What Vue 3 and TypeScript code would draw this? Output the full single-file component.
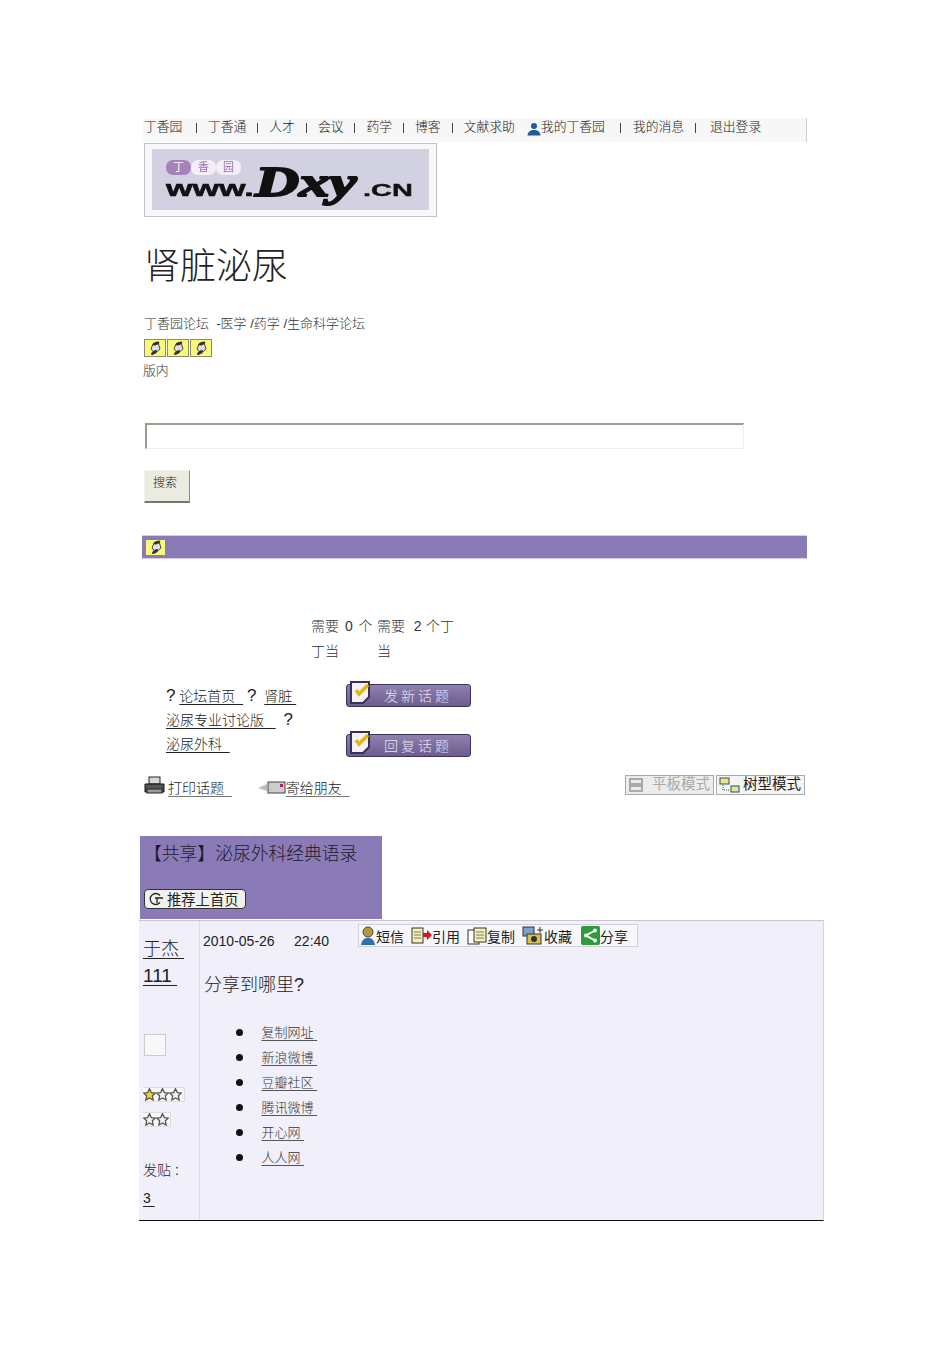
<script setup lang="ts">
const navA = ['丁香园', '丁香通', '人才', '会议', '药学', '博客']
const navB = ['我的消息', '退出登录']
const scrolls = [1, 2, 3]
const shares = ['复制网址', '新浪微博', '豆瓣社区', '腾讯微博', '开心网', '人人网']
const modeA = '平板模式'
const modeB = '树型模式'
const fullStars = [true, false, false]
</script>

<template>
  <div class="page">
    <nav class="topbar">
      <template v-for="(item, i) in navA" :key="item">
        <span>{{ item }}</span><i class="sep" :class="{ first: i === 0 }"></i>
      </template>
      <span>文献求助</span>
      <svg class="person" width="14" height="14" viewBox="0 0 14 14"><circle cx="7" cy="4" r="3" fill="#1f5a9c"/><path d="M0.5 13.5c.5-4 3-5.5 6.5-5.5s6 1.500 6.500 5.500z" fill="#1f5a9c"/></svg>
      <span>我的丁香园</span><i class="sep wide"></i>
      <span>{{ navB[0] }}</span><i class="sep last"></i>
      <span>{{ navB[1] }}</span>
    </nav>

    <div class="logo-frame">
      <div class="logo">
        <div class="logo-pill"><b>丁</b><b>香</b><b>园</b></div>
        <div class="logo-line">
          <span class="www">www.</span><span class="dxy">Dxy</span><span class="cn">.CN</span>
        </div>
      </div>
    </div>

    <h1 class="title">肾脏泌尿</h1>
    <p class="crumb">丁香园论坛&nbsp; -医学 /药学 /生命科学论坛</p>

    <div class="scroll-row">
      <span v-for="n in scrolls" :key="n" class="scroll">
        <svg width="14" height="14" viewBox="0 0 14 14"><path d="M5 3l5-1.500L12 8l-5 4.500L3 8z" fill="#e2e2dc" stroke="#444"/><ellipse cx="8" cy="2.500" rx="3.500" ry="1.500" transform="rotate(-20 8 2.500)" fill="#333"/><ellipse cx="6" cy="11.500" rx="3.500" ry="1.500" transform="rotate(-35 6 11.500)" fill="#333"/></svg>
      </span>
    </div>
    <p class="inside">版内</p>

    <input class="search" type="text" aria-label="搜索" />
    <button class="search-btn" type="button">搜索</button>

    <div class="band">
      <span class="scroll">
        <svg width="14" height="14" viewBox="0 0 14 14"><path d="M5 3l5-1.500L12 8l-5 4.500L3 8z" fill="#e2e2dc" stroke="#444"/><ellipse cx="8" cy="2.500" rx="3.500" ry="1.500" transform="rotate(-20 8 2.500)" fill="#333"/><ellipse cx="6" cy="11.500" rx="3.500" ry="1.500" transform="rotate(-35 6 11.500)" fill="#333"/></svg>
      </span>
    </div>

    <div class="need">
      <div><p class="wide-words">需要 0 个</p><p>丁当</p></div>
      <div><p class="tight-words">需要 &nbsp;2 个丁</p><p>当</p></div>
    </div>

    <div class="forum-row">
      <div class="trail">
        <span class="q">?</span> <a>论坛首页&nbsp;&nbsp;</a> <span class="q">?</span> &nbsp;<a>肾脏&nbsp;</a><br />
        <a>泌尿专业讨论版&nbsp;&nbsp;&nbsp;</a> &nbsp;<span class="q">?</span><br />
        <a>泌尿外科&nbsp;&nbsp;</a>
      </div>
      <div class="actions">
        <div class="post-btn">
          <svg class="doc" width="24" height="24" viewBox="0 0 24 24"><path d="M2 1h18v15l-6 6H2z" fill="#f4f2f8" stroke="#3a2f5c" stroke-width="2"/><path d="M7 9l3 4 9-9" fill="none" stroke="#e2b711" stroke-width="3.500"/></svg>
          <span>发新话题</span>
        </div>
        <div class="post-btn">
          <svg class="doc" width="24" height="24" viewBox="0 0 24 24"><path d="M2 1h18v15l-6 6H2z" fill="#f4f2f8" stroke="#3a2f5c" stroke-width="2"/><path d="M7 9l3 4 9-9" fill="none" stroke="#e2b711" stroke-width="3.500"/></svg>
          <span>回复话题</span>
        </div>
      </div>
    </div>

    <div class="tools">
      <svg class="printer" width="21" height="19" viewBox="0 0 21 19"><rect x="5" y="1" width="11" height="7" fill="#d8d8d8" stroke="#222"/><path d="M1 8h19v8H1z" fill="#555" stroke="#111"/><rect x="3" y="13" width="15" height="4" fill="#999" stroke="#222"/></svg>
      <a class="tool-link">打印话题&nbsp;&nbsp;</a>
      <svg class="mail" width="28" height="13" viewBox="0 0 28 13"><path d="M0 7l9-4v7z" fill="#bbb"/><rect x="10" y="1" width="17" height="11" fill="#ccc" stroke="#444"/><rect x="22" y="3" width="3" height="3" fill="#b0206a"/></svg>
      <a class="tool-link plain">寄给朋友&nbsp;&nbsp;</a>
      <div class="modes">
        <div class="mode off">
          <svg width="14" height="14" viewBox="0 0 14 14"><path d="M1 1h12v5H1zM1 8h12v5H1z" fill="none" stroke="#aaa" stroke-width="2"/></svg>
          <span>{{ modeA }}</span>
        </div>
        <div class="mode on">
          <svg width="21" height="16" viewBox="0 0 21 16"><path d="M4 6v7h7" fill="none" stroke="#555" stroke-dasharray="1 1"/><rect x="1" y="1" width="9" height="6" fill="#f0e28a" stroke="#355"/><rect x="12" y="9" width="8" height="6" fill="#f0e28a" stroke="#157"/></svg>
          <span>{{ modeB }}</span>
        </div>
      </div>
    </div>

    <section class="thread-head">
      <h2>【共享】泌尿外科经典语录</h2>
      <button class="recommend" type="button">
        <svg width="16" height="14" viewBox="0 0 16 14"><path d="M12 3.500A5.500 5.500 0 1 0 12 10.500" fill="none" stroke="#222" stroke-width="1.300"/><path d="M7 6h8M9 6v5" stroke="#222" stroke-width="1.300" fill="none"/></svg>
        推荐上首页
      </button>
    </section>

    <section class="post">
      <aside class="author">
        <a class="name">于杰&nbsp;</a>
        <a class="uid">111&nbsp;</a>
        <div class="avatar"></div>
        <div class="stars three">
          <svg v-for="(on, i) in fullStars" :key="i" width="13" height="13" viewBox="0 0 20 20"><path d="M10 1l2.800 6 6.200.8-4.600 4.200 1.200 6.400L10 15.200 4.400 18.400l1.200-6.400L1 7.800 7.200 7z" :fill="on ? '#f5d423' : '#f4f4f4'" stroke="#555" stroke-width="2"/></svg>
        </div>
        <div class="stars two">
          <svg v-for="i in 2" :key="i" width="13" height="13" viewBox="0 0 20 20"><path d="M10 1l2.800 6 6.200.8-4.600 4.200 1.200 6.400L10 15.200 4.400 18.400l1.200-6.400L1 7.800 7.200 7z" fill="#f4f4f4" stroke="#555" stroke-width="2"/></svg>
        </div>
        <p class="count-label">发贴&nbsp;:</p>
        <a class="count">3&nbsp;</a>
      </aside>

      <div class="body">
        <div class="meta">
          <time>2010-05-26 &nbsp;&nbsp;&nbsp; 22:40</time>
          <div class="post-tools">
            <span class="tool">
              <svg width="16" height="20" viewBox="0 0 16 20"><circle cx="8" cy="6" r="5" fill="#b49a3a" stroke="#445"/><path d="M1 19c1-6 4-7 7-7s6 1 7 7z" fill="#2f6fae"/></svg>短信
            </span>
            <span class="tool">
              <svg width="21" height="17" viewBox="0 0 21 17"><rect x="1" y="1" width="11" height="15" fill="#f6f0b5" stroke="#333"/><path d="M3 5h7M3 8h7M3 11h7" stroke="#777"/><path d="M12 6h4V3l5 5-5 5v-3h-4z" fill="#e0101c"/></svg>引用
            </span>
            <span class="tool">
              <svg width="20" height="18" viewBox="0 0 20 18"><rect x="1" y="3" width="11" height="14" fill="#fff" stroke="#333"/><rect x="7" y="1" width="12" height="14" fill="#f6f0b5" stroke="#333"/><path d="M9 5h8M9 8h8M9 11h8" stroke="#777"/></svg>复制
            </span>
            <span class="tool">
              <svg width="22" height="19" viewBox="0 0 22 19"><rect x="1" y="1" width="11" height="9" fill="#7fa0c8" stroke="#333"/><rect x="5" y="8" width="14" height="10" fill="#d7c25a" stroke="#333"/><circle cx="12" cy="13" r="3" fill="#333"/><path d="M18 1v6M15 4h6" stroke="#333"/></svg>收藏
            </span>
            <span class="tool share">
              <svg width="19" height="19" viewBox="0 0 19 19"><rect width="19" height="19" rx="2" fill="#2d9a3c"/><path d="M14 4.500L5 9.500l9 5" fill="none" stroke="#fff" stroke-width="2"/><circle cx="14" cy="4.500" r="2" fill="#fff"/><circle cx="5" cy="9.500" r="2" fill="#fff"/><circle cx="14" cy="14.500" r="2" fill="#fff"/></svg>分享
            </span>
          </div>
        </div>
        <p class="question">分享到哪里?</p>
        <ul class="shares">
          <li v-for="s in shares" :key="s"><a>{{ s }}&nbsp;</a></li>
        </ul>
      </div>
    </section>
  </div>
</template>

<style>
html, body { margin: 0; background: #fff; }
</style>

<style scoped>
.page {
  box-sizing: border-box;
  width: 950px;
  height: 1345px;
  padding: 118px 0 0 139px;
  overflow: hidden;
  font-family: "Liberation Sans", "Noto Sans CJK SC", sans-serif;
  font-weight: 300;
  color: #222;
}
p, h1, h2 { margin: 0; font-weight: 300; }
a { color: #222; text-decoration: underline; text-underline-offset: 3px; }

.topbar {
  display: flex;
  align-items: center;
  box-sizing: border-box;
  width: 664px;
  height: 24px;
  margin-left: 4px;
  padding: 0 0 6px 1px;
  font-size: 12.8px;
  line-height: 18px;
  white-space: nowrap;
  background: #f7f7f7;
  border-right: 1px solid #ccc;
}
.sep { width: 1px; height: 10px; margin: 2px 11px 0; background: #444; }
.sep.first { margin-left: 13.500px; }
.sep.wide { margin: 2px 11.500px 0 15.500px; }
.sep.last { margin-right: 14px; }
.person { margin-left: 12px; margin-right: 0; margin-top: 4px; }

.logo-frame {
  box-sizing: border-box;
  width: 293px;
  height: 74px;
  margin: 1px 0 0 5px;
  padding: 5px 7px;
  background: #f8f8fb;
  border: 1px solid #c2c2c8;
}
.logo {
  box-sizing: border-box;
  height: 61px;
  padding: 11px 0 0 14px;
  overflow: hidden;
  background: #d2d1e2;
  filter: blur(0.5px);
}
.logo-pill { display: flex; gap: 0; width: 75px; height: 15px; }
.logo-pill b {
  width: 25px;
  height: 15px;
  font-size: 11px;
  line-height: 15px;
  text-align: center;
  color: #a070b4;
  background: #f4eef7;
  border-radius: 7px;
}
.logo-pill b:first-child { color: #fff; background: #a383b8; }
.logo-line { display: flex; align-items: baseline; height: 30px; margin-top: -8px; color: #111; white-space: nowrap; }
.www {
  display: inline-block;
  width: 89px;
  font: 900 22px/30px "Liberation Sans", sans-serif;
  transform: scaleX(1.550);
  transform-origin: left;
  -webkit-text-stroke: 0.6px #111;
}
.dxy {
  display: inline-block;
  width: 108px;
  font: italic 700 42px/30px "Liberation Serif", serif;
  transform: scaleX(1.450);
  transform-origin: left;
  -webkit-text-stroke: 2px #111;
}
.cn {
  display: inline-block;
  font: 700 17px/30px "Liberation Sans", sans-serif;
  transform: scaleX(1.700);
  transform-origin: left;
  -webkit-text-stroke: 0.4px #111;
}

.title { margin: 24px 0 0 5px; font-size: 36px; line-height: 52px; white-space: nowrap; }
.crumb { margin: 21px 0 0 5px; font-size: 13px; line-height: 19px; color: #333; }

.scroll-row { display: flex; gap: 1px; margin: 6px 0 0 5px; }
.scroll {
  display: flex;
  align-items: center;
  justify-content: center;
  box-sizing: border-box;
  width: 22px;
  height: 18px;
  background: #fbf97a;
  border: 1px solid #8a8a6c;
}
.inside { margin: 4px 0 0 4px; font-size: 12.8px; line-height: 19px; color: #333; }

.search {
  display: block;
  box-sizing: border-box;
  width: 599px;
  height: 26px;
  margin: 43px 0 0 6px;
  background: #fff;
  border-style: solid;
  border-width: 2px 1px 1px 2px;
  border-color: #9b9b8d #eee #eee #9b9b8d;
}
.search-btn {
  display: block;
  width: 46px;
  height: 33px;
  margin: 21px 0 0 5px;
  padding: 0 4px 9px 0;
  font: 300 12px "Noto Sans CJK SC", sans-serif;
  color: #222;
  background: #ecebdf;
  border-style: solid;
  border-width: 1px 1px 2px 1px;
  border-color: #f3f3ea #8c8c7e #77776c #f3f3ea;
}

.band {
  display: flex;
  align-items: center;
  box-sizing: border-box;
  width: 665px;
  height: 24px;
  margin: 32px 0 0 3px;
  padding-left: 3px;
  background: #8a7ab5;
  border-top: 1px solid #d4cfe6;
  border-bottom: 1px solid #d4cfe6;
}
.band .scroll { width: 21px; height: 17px; }

.need {
  display: grid;
  grid-template-columns: 66px auto;
  width: 160px;
  margin: 55px 0 0 172px;
  font-size: 14px;
  line-height: 25px;
  color: #333;
  white-space: nowrap;
}
.wide-words { word-spacing: 2px; }
.tight-words { word-spacing: 0.5px; }

.forum-row { display: flex; margin-top: 18px; }
.trail { width: 180px; margin-left: 27px; font-size: 14px; line-height: 24px; margin-top: 2px; white-space: nowrap; }
.q { font-size: 17px; }
.actions { display: flex; flex-direction: column; gap: 27px; margin-top: 2px; }
.post-btn {
  position: relative;
  box-sizing: border-box;
  width: 125px;
  height: 23px;
  padding-left: 37px;
  font-size: 14px;
  line-height: 22px;
  letter-spacing: 3px;
  color: #e6e1f2;
  background: linear-gradient(#8f80ad, #6c5d92);
  border: 1px solid #3d3360;
  border-radius: 3px;
}
.doc { position: absolute; left: 2px; top: -4px; }

.tools { display: flex; align-items: center; width: 661px; height: 24px; margin: 18px 0 0 5px; font-size: 14px; white-space: nowrap; }
.printer { align-self: flex-start; margin-top: 1px; }
.tool-link { margin-left: 3px; text-decoration-color: #777; }
.tool-link.plain { margin-left: 0; }
.mail { margin: 0 0 0 26px; }
.modes { display: flex; align-self: flex-start; gap: 2px; margin-left: auto; }
.mode {
  display: flex;
  align-items: center;
  gap: 3px;
  box-sizing: border-box;
  width: 89px;
  height: 20px;
  padding: 0 0 3px 2px;
  font-size: 14.500px;
  line-height: 16px;
  font-weight: 400;
  background: #ececec;
  border: 1px solid #aaa;
}
.mode svg { margin-top: 3px; }
.mode.off { color: #aaa; gap: 9px; padding-left: 3px; }
.mode.on { color: #222; background: #f4f4f4; }

.thread-head {
  box-sizing: border-box;
  width: 242px;
  height: 83px;
  margin: 37px 0 0 1px;
  padding: 5px 0 0 4px;
  background: #8a7ab5;
}
.thread-head h2 { font-size: 17.800px; line-height: 26px; color: #1d1a2c; white-space: nowrap; }
.recommend {
  display: flex;
  align-items: center;
  gap: 3px;
  box-sizing: border-box;
  width: 102px;
  height: 20px;
  margin-top: 22px;
  padding: 0 0 0 3px;
  font: 400 14.300px/16px "Noto Sans CJK SC", sans-serif;
  color: #222;
  background: #f1f1ee;
  border: 1px solid #333;
  border-radius: 4px;
  white-space: nowrap;
}

.post {
  display: flex;
  box-sizing: border-box;
  width: 685px;
  height: 301px;
  margin-top: 1px;
  background: #f1f0fa;
  border-top: 1px solid #c6c6cc;
  border-right: 1px solid #d4d4dc;
  border-bottom: 1px solid #111;
}
.author {
  box-sizing: border-box;
  width: 61px;
  padding: 14px 0 0 4px;
  border-right: 1px solid #dcdce6;
}
.name, .uid { display: block; font-size: 18px; line-height: 28px; width: max-content; }
.uid { margin-top: -1px; font-size: 19px; }
.avatar { width: 20px; height: 20px; margin: 44px 0 0 1px; background: #f8f8fb; border: 1px solid #ccc; }
.stars { display: flex; box-sizing: border-box; height: 15px; margin-top: 31px; padding-left: 0; background: #f7f7f7; border: 1px solid #ddd; border-left: 0; }
.three { width: 42px; }
.two { width: 28px; margin-top: 10px; }
.count-label { margin-top: 33px; font-size: 14px; line-height: 20px; }
.count { display: block; margin-top: 8px; font-size: 14px; line-height: 20px; }

.body { flex: 1; padding: 3px 0 0 3px; }
.meta { display: flex; align-items: flex-start; }
time { width: 155px; margin-top: 9px; font-size: 14px; line-height: 17px; color: #222; white-space: nowrap; }
.post-tools {
  display: flex;
  gap: 7px;
  box-sizing: border-box;
  width: 280px;
  height: 23px;
  padding-left: 1px;
  background: #f7f7fb;
  border: 1px solid #d0d0d8;
}
.tool { display: flex; align-items: center; font-size: 14px; font-weight: 400; white-space: nowrap; }
.tool.share { margin-left: 2px; }
.question { margin: 22px 0 0 1px; font-size: 18px; line-height: 27px; }
.shares { margin: 21px 0 0; padding: 0 0 0 33px; font-size: 13px; line-height: 25px; list-style: none; }
.shares li { display: flex; align-items: flex-start; gap: 18.500px; }
.shares li::before { content: ""; width: 7px; height: 7px; margin-top: 9px; background: #111; border-radius: 50%; }
.shares a { color: #333; text-decoration-color: #555; }
</style>
